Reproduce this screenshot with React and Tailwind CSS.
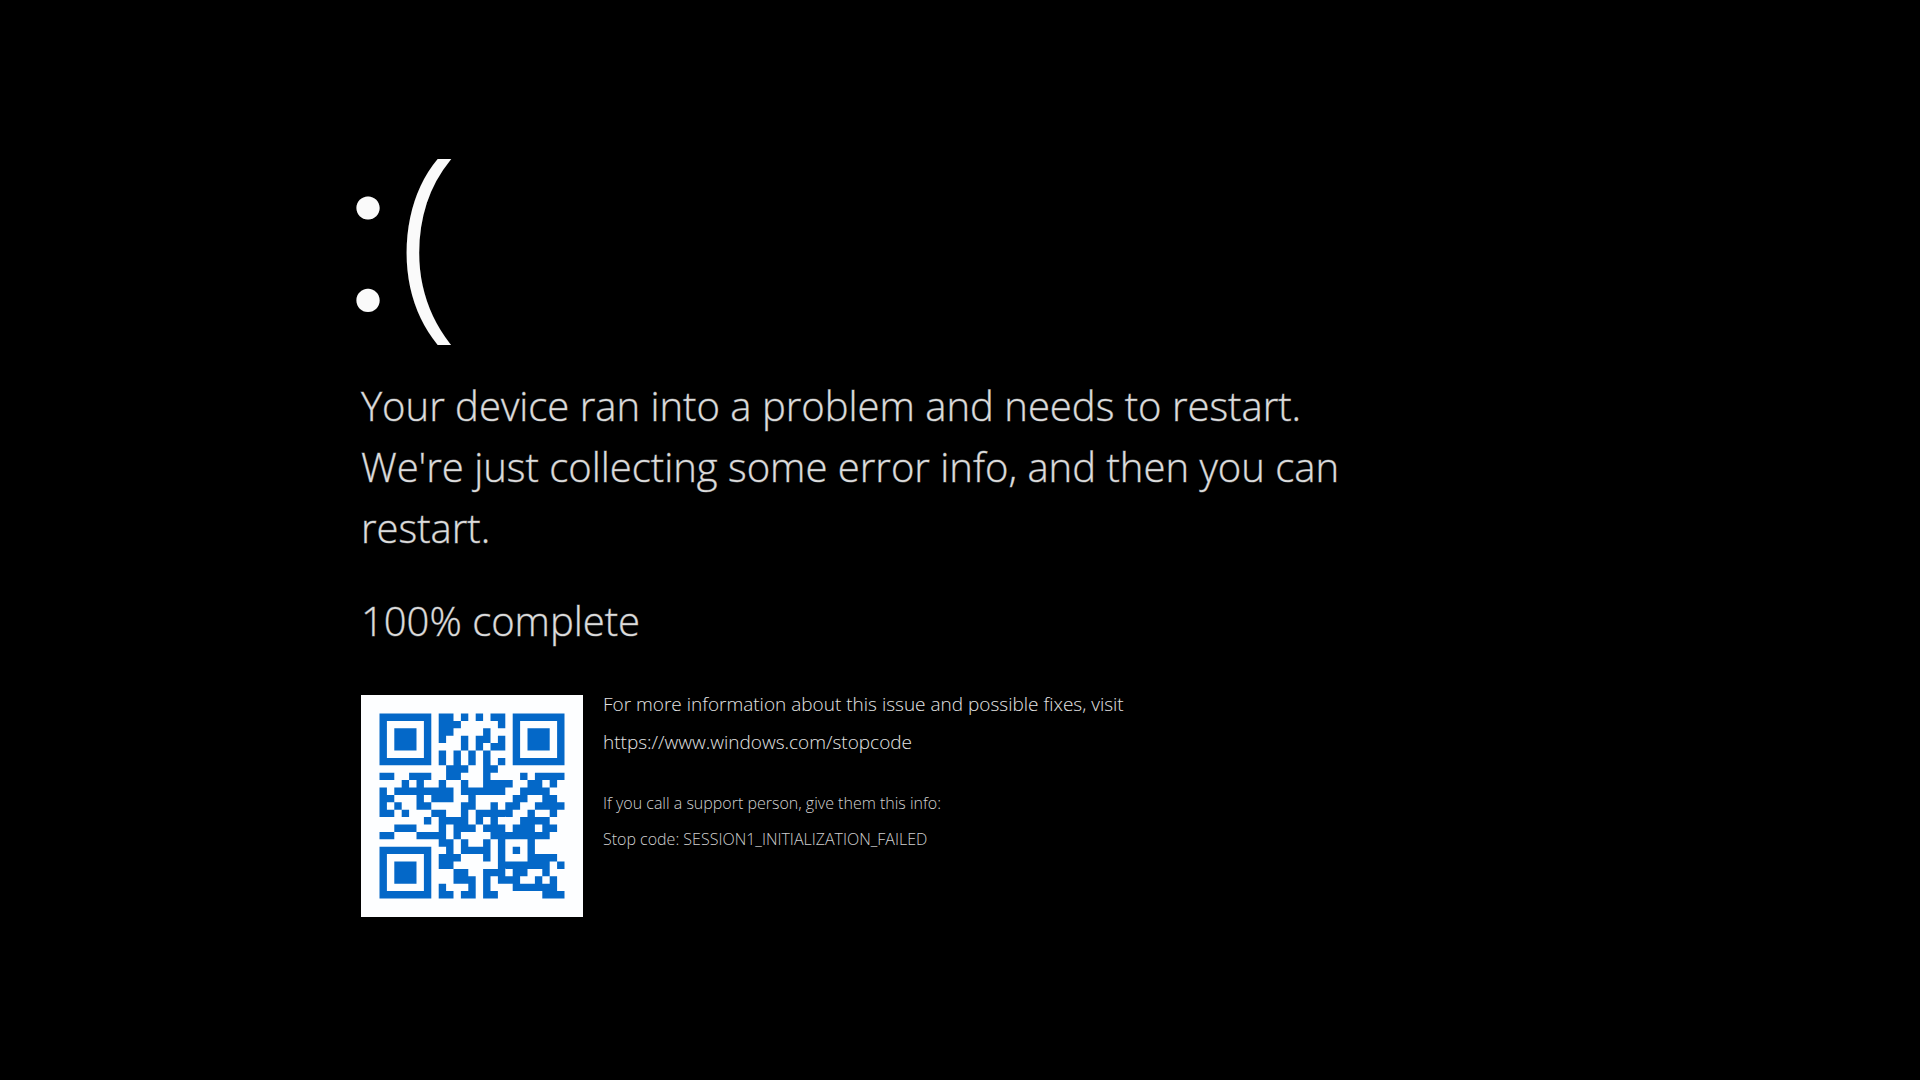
import React from 'react';

const QR_ROWS = [
  '#######.##.#.#.##.#######',
  '#.....#.###.....#.#.....#',
  '#.###.#.##....#...#.###.#',
  '#.###.#.#..#.##.#.#.###.#',
  '#.###.#....#.#.##.#.###.#',
  '#.....#.#.#.#.#...#.....#',
  '#######.#.#.#.#.#.#######',
  '.........###..##.........',
  '##..###..##...#....#.####',
  '...#.#..#..#..####..##.#.',
  '#.########.######..####..',
  '##...#.###..#.....##..##.',
  '#.#..##....##..#.##..####',
  '##.#...##..#.#####..#..#.',
  '......#.####.#.#...####..',
  '..###...#.###.###.###.##.',
  '##...####.#....########..',
  '........##.#..#.#...#....',
  '#######..#.####.#.#.#....',
  '#.....#.###...#.#...####.',
  '#.###.#.##......#######.#',
  '#.###.#...##..###.##..#..',
  '#.###.#...###.#.###..#.#.',
  '#.....#.#...#.#...######.',
  '#######.##.##.##......###',
];

const qrPath = QR_ROWS.map((row, y) =>
  [...row].map((cell, x) => (cell === '#' ? `M${x} ${y}h1v1h-1z` : '')).join('')
).join('');

const QrCode = () => (
  <svg
    viewBox="-2.5 -2.5 30 30"
    className="w-[222px] h-[222px] shrink-0 bg-[#fdfeff]"
    role="img"
    aria-label="QR code"
  >
    <path d={qrPath} fill="#0468c8" />
  </svg>
);

const SadFace = () => (
  <h1 className="-ml-6 flex items-baseline text-[210px] leading-[240px] text-[#fafafa]">
    <span className="font-['Inter',sans-serif] text-[220px] leading-[240px] font-light">:</span>
    <span className="[-webkit-text-stroke:2px_#fafafa]">(</span>
  </h1>
);

const StopInfo = () => (
  <div className="-mt-2.5">
    <p className="text-[19px] leading-[38px] text-[#e4e4e4]">
      For more information about this issue and possible fixes, visit
      <br />
      <a href="https://www.windows.com/stopcode">https://www.windows.com/stopcode</a>
    </p>
    <div className="mt-6 text-base leading-9 text-[#d0d0d0]">
      <p>If you call a support person, give them this info:</p>
      <p>Stop code: SESSION1_INITIALIZATION_FAILED</p>
    </div>
  </div>
);

export default function App() {
  return (
    <main className="min-h-screen bg-black pl-[18.8%] pt-[110px] pb-16 font-['Open_Sans','Noto_Sans',sans-serif] font-light text-[#dcdcdc]">
      <SadFace />

      <div className="mt-6 max-w-[1000px] text-[40px] leading-[61px] [-webkit-text-stroke:1px_#dcdcdc66]">
        <p>
          Your device ran into a problem and needs to restart. We're just collecting some error
          info, and then you can restart.
        </p>
        <p className="mt-8">100% complete</p>
      </div>

      <div className="mt-11 flex items-start gap-5">
        <QrCode />
        <StopInfo />
      </div>
    </main>
  );
}
